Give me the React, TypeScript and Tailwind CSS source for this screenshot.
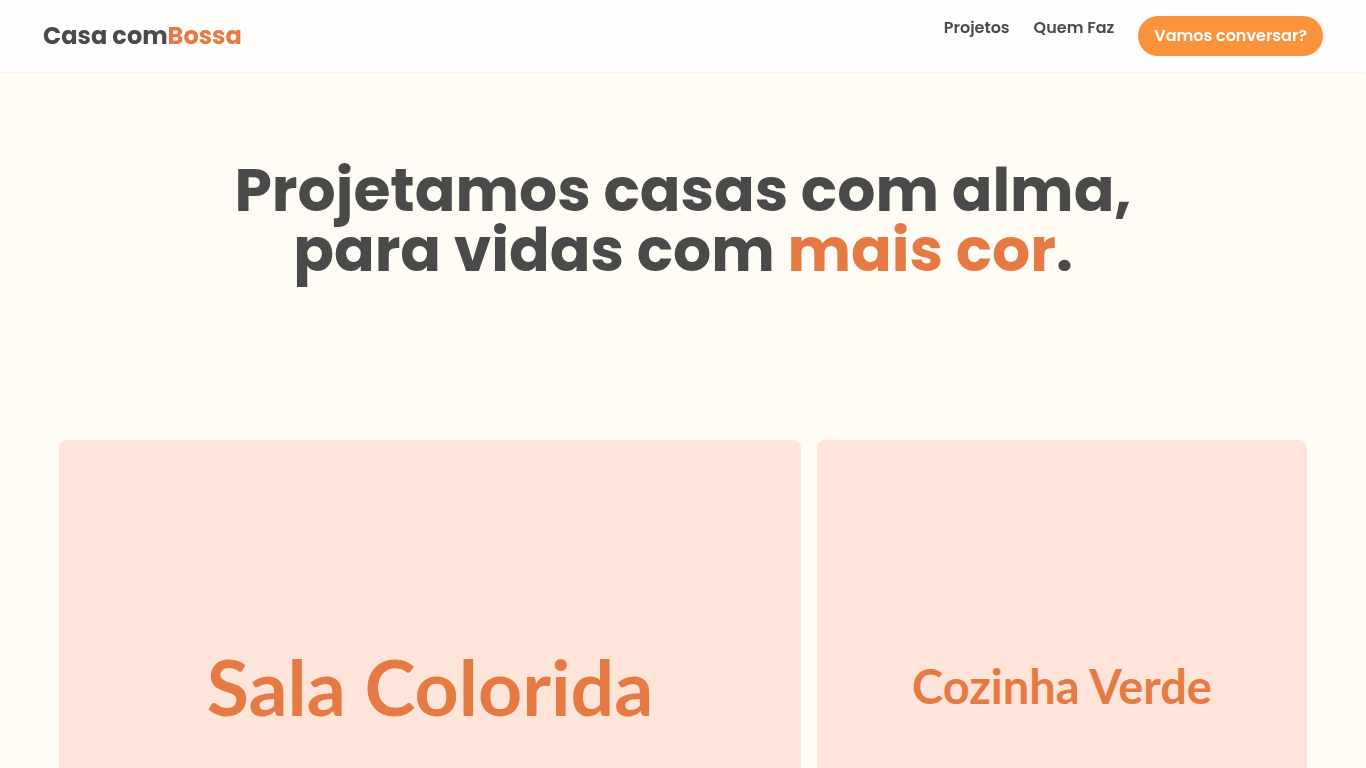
const links = [
  { label: "Projetos", href: "#projetos" },
  { label: "Quem Faz", href: "#quem-faz" },
];

function Header() {
  return (
    <header className="sticky top-0 z-50 bg-white/80 shadow-xs backdrop-blur-md">
      <div className="mx-auto flex max-w-7xl items-center justify-between py-4">
        <a href="#inicio" className="text-2xl leading-8 font-bold">
          Casa com<span className="text-[#e57a44]">Bossa</span>
        </a>
        <nav className="flex items-start gap-6 text-base font-semibold">
          {links.map((link) => (
            <a key={link.href} href={link.href}>
              {link.label}
            </a>
          ))}
          <a href="#contato" className="rounded-full bg-[#fb923c] px-4 py-2 text-white">
            Vamos conversar?
          </a>
        </nav>
      </div>
    </header>
  );
}

function ProjectCard({ title, className }: { title: string; className: string }) {
  return (
    <article
      className={`flex h-[492px] items-center justify-center rounded-lg bg-[#ffe5d9] font-['Lato',sans-serif] leading-none font-bold text-[#e57a44] ${className}`}
    >
      <h2>{title}</h2>
    </article>
  );
}

export default function App() {
  return (
    <div id="inicio" className="min-h-screen bg-[#fffbf5] font-['Poppins','Open_Sans',sans-serif] text-[#4a4a4a]">
      <Header />
      <main>
        <section className="px-6 pt-[88px] pb-[160px] text-center">
          <h1 className="text-6xl leading-none font-bold">
            Projetamos casas com alma,
            <br />
            para vidas com <span className="text-[#e57a44]">mais cor</span>.
          </h1>
        </section>
        <section id="projetos" className="mx-auto grid max-w-7xl grid-cols-[742fr_490fr] gap-4 px-4">
          <ProjectCard title="Sala Colorida" className="text-[77px]" />
          <ProjectCard title="Cozinha Verde" className="text-[47px]" />
        </section>
      </main>
    </div>
  );
}
